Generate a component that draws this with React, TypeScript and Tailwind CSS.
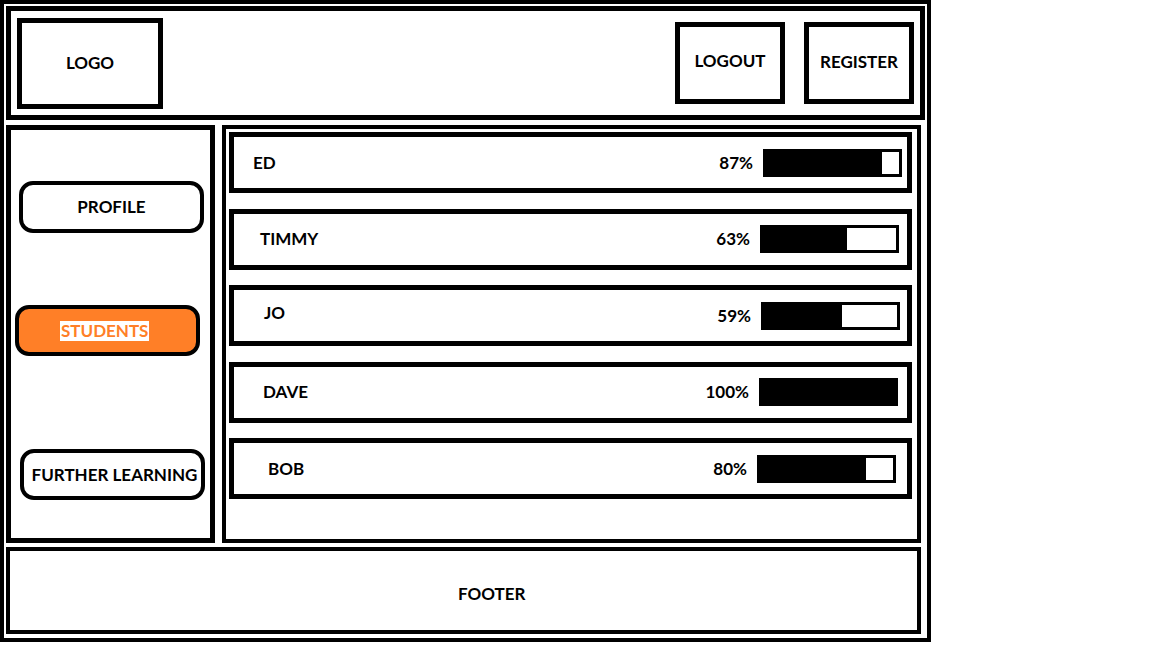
import React from 'react';

const students = [
  { name: 'ED', pct: 87, nameCls: 'pl-[19px]', barCls: 'mr-[5px]' },
  { name: 'TIMMY', pct: 63, nameCls: 'pl-[26px]', barCls: 'mr-[8px]' },
  { name: 'JO', pct: 59, nameCls: 'pl-[30px] -mt-[6px]', barCls: 'mr-[7px]' },
  { name: 'DAVE', pct: 100, nameCls: 'pl-[29px]', barCls: 'mr-[9px]' },
  { name: 'BOB', pct: 80, nameCls: 'pl-[34px]', barCls: 'mr-[11px]' },
];

const App = () => {
  return (
    <div className="min-h-screen bg-white font-[Lato,sans-serif] text-[17px] font-bold text-black">
      <div className="flex h-[642px] w-[931px] flex-col border-4 border-black p-[2px]">
        {/* Header */}
        <header className="flex h-[114px] shrink-0 items-center border-[5px] border-black px-[6px]">
          <div className="flex h-[91px] w-[146px] items-center justify-center border-[5px] border-black">
            LOGO
          </div>
          <div className="ml-auto flex gap-[19px]">
            <button className="flex h-[82px] w-[110px] items-center justify-center border-[5px] border-black pb-[4px]">
              LOGOUT
            </button>
            <button className="flex h-[82px] w-[110px] items-center justify-center border-[5px] border-black pb-[2px]">
              REGISTER
            </button>
          </div>
        </header>

        {/* Body */}
        <div className="mt-[5px] flex h-[418px] shrink-0 gap-[7px]">
          {/* Sidebar */}
          <aside className="flex w-[209px] flex-col border-[5px] border-black pt-[51px]">
            <button className="ml-[8px] flex h-[52px] w-[185px] items-center justify-center rounded-[14px] border-4 border-black">
              PROFILE
            </button>
            <button className="ml-[4px] mt-[72px] flex h-[51px] w-[185px] items-center rounded-[14px] border-4 border-black bg-[#ff7f27] pl-[41px]">
              <span className="bg-white px-[1px] leading-[20px] text-[#ff7f27]">STUDENTS</span>
            </button>
            <button className="ml-[9px] mt-[93px] flex h-[51px] w-[185px] items-center justify-center rounded-[14px] border-4 border-black pl-[4px]">
              FURTHER LEARNING
            </button>
          </aside>

          {/* Students list */}
          <main className="mr-[4px] flex flex-1 flex-col gap-[15.5px] border-4 border-black pl-[3px] pr-[5px] pt-[3px]">
            {students.map((s) => (
              <div key={s.name} className="flex h-[61px] shrink-0 items-center border-[5px] border-black">
                <span className={s.nameCls}>{s.name}</span>
                <div className={`ml-auto flex items-center gap-[10px] ${s.barCls}`}>
                  <span>{s.pct}%</span>
                  <div className="h-[28px] w-[139px] border-[3px] border-black bg-white">
                    <div className="h-full bg-black" style={{ width: `${s.pct}%` }} />
                  </div>
                </div>
              </div>
            ))}
          </main>
        </div>

        {/* Footer */}
        <footer className="mr-[4px] mt-[4px] flex h-[87px] shrink-0 items-center border-4 border-black pl-[448px] pt-[6px]">
          FOOTER
        </footer>
      </div>
    </div>
  );
};

export default App;
